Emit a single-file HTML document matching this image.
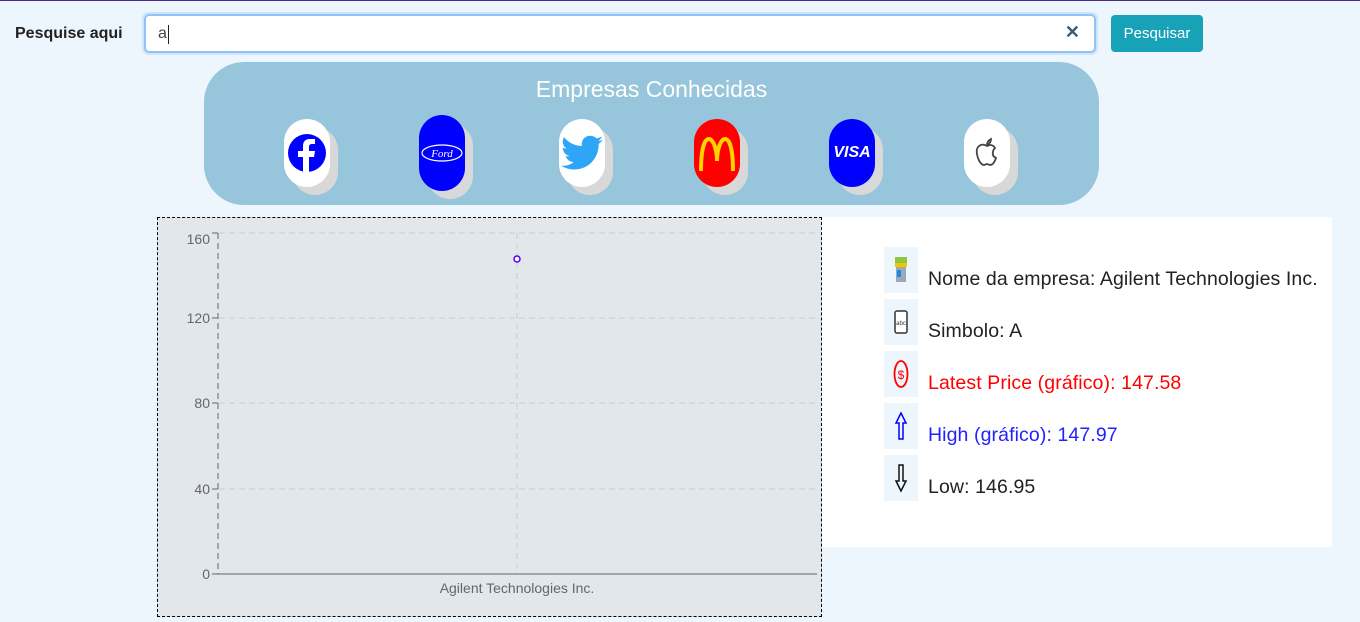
<!DOCTYPE html>
<html><head><meta charset="utf-8"><style>
*{box-sizing:border-box;margin:0;padding:0}
body{width:1360px;height:622px;background:#eef6fd;font-family:"Segoe UI","Liberation Sans",sans-serif;position:relative;overflow:hidden;border-top:1px solid #4b2a8a}
.abs{position:absolute}
.lbl{left:15px;top:24px;font-weight:bold;font-size:16px;color:#222}
.inp{left:144px;top:13px;width:952px;height:39px;background:#fff;border:2px solid #8fc3f7;border-radius:5px;box-shadow:0 0 0 2px #cfe5fb}
.inp span{position:absolute;left:12px;top:9px;font-size:16px;color:#444}
.inp i{position:absolute;left:22px;top:9px;width:1px;height:19px;background:#222}
.x{position:absolute;right:14px;top:6px;font-size:18px;color:#3d5a7a;font-weight:bold}
.btn{left:1111px;top:14px;width:92px;height:37px;background:#17a2b8;border-radius:4px;color:#fff;font-size:15px;text-align:center;line-height:37px}
.ban{left:204px;top:61px;width:895px;height:143px;background:#97c5db;border-radius:40px}
.ban h1{position:absolute;left:0;right:0;top:14px;text-align:center;font-weight:normal;color:#fff;font-size:23px;letter-spacing:0}
.card{position:absolute;width:46px;height:68px;border-radius:23px;box-shadow:8px 8px 0 #d8d8d8;display:flex;align-items:center;justify-content:center}
.chart{left:157px;top:216px;width:665px;height:400px;background:#e2e7eb;border:1px dashed #000}
.info{left:822px;top:216px;width:510px;height:330px;background:#fff}
.row{position:absolute;left:62px;height:46px;display:flex;align-items:center}
.ic{width:34px;height:46px;background:#eef6fd;display:flex;align-items:center;justify-content:center;margin-right:10px}
.row span{font-size:19.5px;color:#222;margin-top:18px;letter-spacing:0.1px}
</style></head><body>
<div class="abs lbl">Pesquise aqui</div>
<div class="abs inp"><span>a</span><i></i><div class="x">✕</div></div>
<div class="abs btn">Pesquisar</div>
<div class="abs ban"><h1>Empresas Conhecidas</h1>
<div class="card" style="left:80px;top:57px;background:#fff"><svg width="40" height="40" viewBox="0 0 40 40"><circle cx="20" cy="20" r="19" fill="#0000ff"/><path d="M22 40V24h5l1-6h-6v-4c0-2 1-3 3-3h3V6h-5c-5 0-7 3-7 7v5h-5v6h5v16z" fill="#fff"/></svg></div>
<div class="card" style="left:215px;top:53px;height:76px;background:#0000ff"><svg width="44" height="20" viewBox="0 0 44 20"><ellipse cx="22" cy="10" rx="20" ry="8" fill="none" stroke="#fff" stroke-width="1.2"/><text x="22" y="14" font-size="11" font-style="italic" fill="#fff" text-anchor="middle" font-family="Liberation Serif,serif">Ford</text></svg></div>
<div class="card" style="left:355px;top:57px;background:#fff"><svg width="42" height="36" viewBox="0 0 24 20"><path d="M24 2.4c-.9.4-1.8.6-2.8.8 1-.6 1.8-1.6 2.2-2.7-1 .6-2 1-3.1 1.2A4.9 4.9 0 0 0 11.9 6 14 14 0 0 1 1.7.9a4.9 4.9 0 0 0 1.5 6.6c-.8 0-1.600-.3-2.2-.6 0 2.4 1.7 4.4 3.900 4.800-.7.2-1.5.2-2.2.1.6 2 2.4 3.4 4.6 3.4A9.9 9.9 0 0 1 0 17.2 14 14 0 0 0 7.5 19.4c9.1 0 14-7.5 14-14v-.6c1-.7 1.8-1.6 2.5-2.4z" fill="#2fa6f5"/></svg></div>
<div class="card" style="left:490px;top:57px;background:#f00"><svg width="40" height="40" viewBox="0 0 40 40"><path d="M4 38C4 14 8 6 12 6s8 10 8 22c0-12 4-22 8-22s8 8 8 32" fill="none" stroke="#ffd200" stroke-width="4"/></svg></div>
<div class="card" style="left:625px;top:57px;background:#0000ff"><span style="color:#fff;font-weight:bold;font-style:italic;font-size:16px;font-family:'Liberation Sans',sans-serif">VISA</span></div>
<div class="card" style="left:760px;top:57px;background:#fff"><svg width="26" height="32" viewBox="0 0 26 32"><path d="M13 9c-2-1-4-2-6-1-3 1-5 4-4 9 1 6 4 11 7 11 1 0 2-1 3-1s2 1 3 1c3 0 5-4 6-7-2-1-4-3-3-6 0-2 1-3 2-4-1-2-3-3-5-3-1 0-2 1-3 1zM13 8c0-3 2-5 4-6 0 3-2 5-4 6z" fill="none" stroke="#444" stroke-width="1.8"/></svg></div>
</div>
<div class="abs chart">
<svg width="665" height="399" style="position:absolute;left:-1px;top:-1px" font-family="Segoe UI,Liberation Sans,sans-serif" font-size="14" fill="#666">
<g stroke="#ccc" stroke-dasharray="6 4"><line x1="62" y1="16" x2="660" y2="16"/><line x1="62" y1="101" x2="660" y2="101"/><line x1="62" y1="186" x2="660" y2="186"/><line x1="62" y1="272" x2="660" y2="272"/><line x1="360" y1="16" x2="360" y2="357"/></g>
<line x1="61" y1="16" x2="61" y2="357" stroke="#666" stroke-dasharray="6 4"/>
<line x1="61" y1="357" x2="660" y2="357" stroke="#666"/>
<g stroke="#666"><line x1="55" y1="16" x2="61" y2="16"/><line x1="55" y1="101" x2="61" y2="101"/><line x1="55" y1="186" x2="61" y2="186"/><line x1="55" y1="272" x2="61" y2="272"/><line x1="55" y1="357" x2="61" y2="357"/></g>
<g text-anchor="end"><text x="53" y="27">160</text><text x="53" y="106">120</text><text x="53" y="191">80</text><text x="53" y="277">40</text><text x="53" y="362">0</text></g>
<text x="360" y="376" text-anchor="middle">Agilent Technologies Inc.</text>
<circle cx="360" cy="42" r="3" fill="#fff" stroke="#5500ff" stroke-width="1.5"/>
</svg></div>
<div class="abs info">
<div class="row" style="top:30px"><div class="ic"><svg width="14" height="26"><rect x="1" y="0" width="12" height="8" fill="#8dc63f"/><rect x="1" y="6" width="12" height="4" fill="#f5c400"/><rect x="2" y="10" width="10" height="15" fill="#9aa9b5"/><rect x="3" y="13" width="4" height="7" fill="#1e88e5"/></svg></div><span>Nome da empresa: Agilent Technologies Inc.</span></div>
<div class="row" style="top:82px"><div class="ic"><svg width="14" height="24"><rect x="1" y="1" width="12" height="22" rx="2" fill="#fff" stroke="#333" stroke-width="1.5"/><text x="7" y="15" font-size="6" text-anchor="middle" fill="#333">abc</text></svg></div><span>Simbolo: A</span></div>
<div class="row" style="top:134px"><div class="ic"><svg width="16" height="30"><ellipse cx="8" cy="15" rx="6.5" ry="13" fill="none" stroke="#f00" stroke-width="1.8"/><text x="8" y="20" font-size="12" text-anchor="middle" fill="#f00">$</text></svg></div><span style="color:#f00">Latest Price (gráfico): 147.58</span></div>
<div class="row" style="top:186px"><div class="ic"><svg width="14" height="30"><path d="M7 2L2 12h3v16h4V12h3z" fill="none" stroke="#00f" stroke-width="1.5"/></svg></div><span style="color:#22f">High (gráfico): 147.97</span></div>
<div class="row" style="top:238px"><div class="ic"><svg width="14" height="30"><path d="M7 28L2 18h3V2h4v16h3z" fill="none" stroke="#111" stroke-width="1.5"/></svg></div><span>Low: 146.95</span></div>
</div>
</body></html>
